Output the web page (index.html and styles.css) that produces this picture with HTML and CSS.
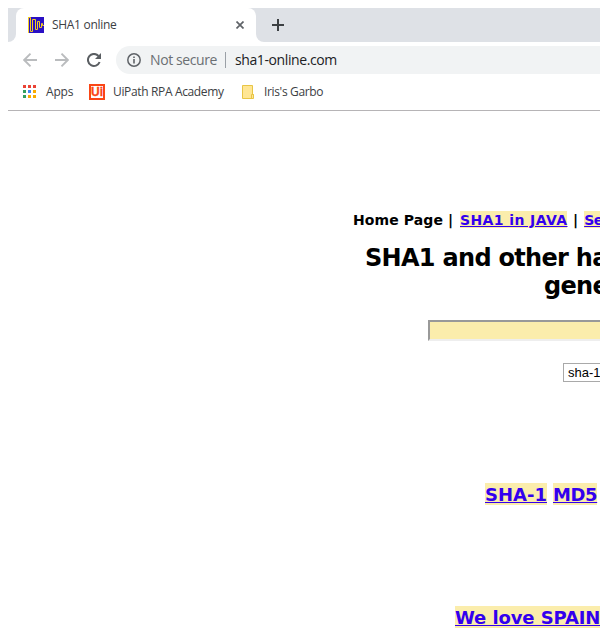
FILE: index.html
```html
<!DOCTYPE html>
<html lang="en">
<head>
<meta charset="utf-8">
<title>SHA1 online</title>
<link rel="stylesheet" href="styles.css">
</head>
<body>
<div class="browser">
  <div class="tabstrip">
    <div class="strip-left"></div>
    <div class="tab">
      <svg class="favicon" width="16" height="16" viewBox="0 0 16 16"><path fill="#2a10c4" d="M0 0h16v16H0z"/><path fill="#f2cc24" d="M0 0h1v16H0z"/><path fill="none" stroke="#f2cc24" d="M0 .5h2.500v14h2v-12h3v10h2v-8h2v6h2v-4h1v2h2"/></svg>
      <span class="tab-title">SHA1 online</span>
      <svg class="close" width="8" height="8" viewBox="0 0 8 8"><path d="M.5.5l7 7m0-7l-7 7" stroke="#5f6368" stroke-width="1.700"/></svg>
    </div>
    <div class="strip-right">
      <svg width="12" height="12" viewBox="0 0 12 12"><path d="M6 0v12M0 6h12" stroke="#3c4043" stroke-width="2"/></svg>
    </div>
  </div>
  <div class="toolbar">
    <svg class="nav-icon" width="14" height="14" viewBox="0 0 14 14"><path d="M14 7H1.500M7.500.7L1.200 7l6.300 6.300" fill="none" stroke="#babcbe" stroke-width="1.900"/></svg>
    <svg class="nav-icon" width="14" height="14" viewBox="0 0 14 14"><path d="M0 7h12.500M6.500.7L12.800 7l-6.300 6.300" fill="none" stroke="#babcbe" stroke-width="1.900"/></svg>
    <svg class="nav-icon" width="14" height="14" viewBox="0 0 14 14"><path d="M12.600 9A6 6 0 1 1 11.500 3" fill="none" stroke="#5a5e62" stroke-width="2"/><path d="M14 0v6H8z" fill="#5a5e62"/></svg>
    <div class="omnibox">
      <svg width="14" height="14" viewBox="0 0 14 14"><circle cx="7" cy="7" r="6.200" fill="none" stroke="#5f6368" stroke-width="1.500"/><path d="M6.200 6h1.600v4.500H6.200zM6.200 3.400h1.600V5H6.200z" fill="#5f6368"/></svg>
      <span class="security">Not secure</span>
      <span class="divider"></span>
      <span class="url">sha1-online.com</span>
    </div>
  </div>
  <div class="bookmarks">
    <svg class="apps-icon" width="13" height="13" viewBox="0 0 13 13"><path fill="#ea4335" d="M0 0h3v3H0zM5 0h3v3H5zM10 0h3v3h-3z"/><path fill="#34a060" d="M0 5h3v3H0zM0 10h3v3H0z"/><path fill="#4285f4" d="M5 5h3v3H5z"/><path fill="#f9ab00" d="M10 5h3v3h-3zM5 10h3v3H5zM10 10h3v3h-3z"/></svg>
    <span class="bm-apps">Apps</span>
    <span class="uipath">Ui</span>
    <span class="bm-uipath">UiPath RPA Academy</span>
    <svg class="folder" width="12" height="14" viewBox="0 0 12 14"><path d="M.5.500h10v9h1v4H.5z" fill="#ffe694" stroke="#e8c545"/><path d="M9.500 13.500v-4h2" fill="none" stroke="#e8c545"/></svg>
    <span class="bm-iris">Iris's Garbo</span>
  </div>
  <div class="page">
    <div class="menu"><span class="menu-home">Home Page |</span><a class="menu-java" href="#">SHA1 in JAVA</a><span>|</span><a class="menu-next" href="#">Se</a></div>
    <h1><span class="title-top">SHA1 and other ha</span><span class="title-bottom">gene</span></h1>
    <div class="hash-input"></div>
    <div class="algorithm">sha-1</div>
    <div class="hash-links"><a class="sha" href="#">SHA-1</a><a class="md" href="#">MD5</a></div>
    <div class="spain"><a href="#">We love SPAIN</a></div>
  </div>
</div>
</body>
</html>
```

FILE: styles.css
```css
* { box-sizing: border-box; }
body { margin: 0; background: #fff; overflow: hidden; }
svg { display: block; flex: none; }
.browser {
  width: 600px;
  height: 632px;
  padding: 8px 0 0 8px;
  overflow: hidden;
  white-space: nowrap;
  font: 12px/16px "Open Sans", "Noto Sans", sans-serif;
  color: #3c4043;
}
.tabstrip { display: flex; height: 34px; background: linear-gradient(#dee1e6 50%, #fff 50%); }
.strip-left { width: 8px; background: #dee1e6; border-bottom-right-radius: 8px; }
.tab {
  display: flex;
  align-items: center;
  width: 240px;
  padding: 0 12px;
  background: #fff;
  border-radius: 8px 8px 0 0;
}
.tab-title { flex: 1; margin-left: 8px; letter-spacing: -0.3px; }
.strip-right { flex: 1; padding: 11px 16px; background: #dee1e6; border-bottom-left-radius: 8px; }
.toolbar { display: flex; align-items: center; height: 36px; padding-left: 15px; }
.nav-icon { margin-right: 18px; }
.omnibox {
  display: flex;
  align-items: center;
  width: 500px;
  height: 28px;
  margin-left: -3px;
  padding-left: 11px;
  background: #f1f3f4;
  border-radius: 14px 0 0 14px;
  font-size: 14px;
}
.security { width: 67px; margin-left: 9px; color: #6b6f73; letter-spacing: -0.4px; }
.divider { width: 1px; height: 16px; margin: 0 9px 0 8px; background: #9aa0a6; }
.url { color: #202124; letter-spacing: -0.4px; }
.bookmarks { display: flex; align-items: center; height: 33px; padding: 0 0 5px 15px; border-bottom: 1px solid #b6b4b6; }
.bm-apps { width: 27px; margin-left: 10px; letter-spacing: -0.2px; }
.uipath {
  width: 16px;
  height: 16px;
  margin-left: 16px;
  border: 2px solid #fa4616;
  color: #fa4616;
  font: bold 12px/13px "Liberation Sans", sans-serif;
  text-align: center;
  -webkit-text-stroke: 0.3px #fa4616;
}
.bm-uipath { width: 111px; margin-left: 8px; letter-spacing: -0.35px; }
.folder { margin-left: 18px; }
.bm-iris { margin-left: 10px; letter-spacing: -0.35px; }
.page {
  padding-top: 100px;
  color: #000;
  font: bold 14px/19px "DejaVu Sans", sans-serif;
}
.page a { display: block; background: #fbedac; color: #3300ee; text-decoration: underline; }
.menu { display: flex; height: 17px; padding-left: 345px; }
.menu > * { flex: none; }
.menu-home { width: 107px; letter-spacing: 0.1px; }
.menu-java { width: 107px; margin-right: 6px; letter-spacing: 0.4px; }
.menu-next { margin-left: 6px; letter-spacing: -0.4px; }
h1 { height: 56px; margin: 15px 0 0; padding-top: 1px; font-size: 24px; line-height: 28px; letter-spacing: -0.7px; }
h1 span { display: block; }
.title-top { padding-left: 357px; }
.title-bottom { padding-left: 536px; }
.hash-input {
  width: 300px;
  height: 21px;
  margin: 21px 0 0 420px;
  background: #fbedac;
  border: 2px solid #999;
  border-bottom-color: #eee;
}
.algorithm {
  width: 80px;
  height: 19px;
  margin: 22px 0 0 555px;
  padding-left: 4px;
  border: 1px solid #a9a9a9;
  font: 13px/17px "Liberation Sans", sans-serif;
}
.hash-links { display: flex; gap: 6px; height: 22px; margin: 101px 0 0 477px; font-size: 18px; line-height: 24px; }
.sha { width: 62px; }
.md { width: 44px; letter-spacing: -0.4px; }
.spain { display: flex; height: 22px; margin: 101px 0 0 447px; font-size: 18px; line-height: 24px; letter-spacing: -0.1px; }
```
